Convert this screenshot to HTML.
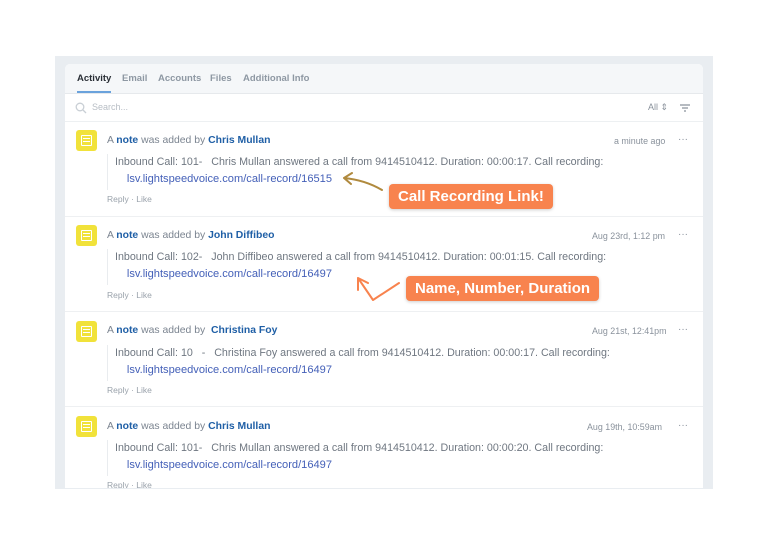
<!DOCTYPE html>
<html><head><meta charset="utf-8"><style>
*{margin:0;padding:0;box-sizing:border-box}
body{width:768px;height:543px;background:#fff;font-family:"Liberation Sans",sans-serif;position:relative;overflow:hidden}
.frame{position:absolute;left:55px;top:56px;width:658px;height:433px;background:#e9edf1}
.card{position:absolute;left:65px;top:64px;width:638px;height:424px;background:#fff;border-radius:5px 5px 0 0;overflow:hidden}
.tabs{position:absolute;left:0;top:0;width:638px;height:30px;background:#f5f7f9;border-bottom:1px solid #e6e9ec}
.tab{position:absolute;top:9px;font-size:9.5px;font-weight:bold;color:#8e98a3}
.search{position:absolute;left:0;top:31px;width:638px;height:27px;border-bottom:1px solid #edf0f2}
.a{position:absolute;white-space:nowrap}
.ic{position:absolute;left:11px;width:21px;height:21px;background:#f1e23a;border-radius:3px}
.ic i{position:absolute;left:5px;top:5px;width:11px;height:11px;border:1.5px solid #fff;border-radius:1px}
.ic b{position:absolute;left:7px;height:1.4px;width:7px;background:#fff}
.hd{font-size:10.4px;color:#7b8490}
.hd b{color:#1f5fa6}
.bd{font-size:10.7px;color:#6f7781;border-left:1px solid #e9ecef;padding-left:7px;height:36px;line-height:17px}
.lk{color:#4460b8;font-size:11.1px}
.rl{font-size:8.5px;color:#9aa2ab}
.tm{font-size:8.9px;color:#8a929c}
.dots{font-size:10px;color:#8a929c}
.sep{position:absolute;left:0;width:638px;height:1px;background:#eef0f2}
.call{position:absolute;background:#f8834e;color:#fff;font-weight:bold;font-size:15px;border-radius:4px;padding:0 9px;height:25px;line-height:25px;box-shadow:0 1px 3px rgba(0,0,0,.2)}
</style></head><body>
<div class="frame"></div>
<div class="card">
 <div class="tabs">
  <span class="tab" style="left:12px;color:#2a2f36">Activity</span>
  <div style="position:absolute;left:12px;top:27px;width:34px;height:2px;background:#6aa2dc"></div>
  <span class="tab" style="left:57px">Email</span>
  <span class="tab" style="left:93px">Accounts</span>
  <span class="tab" style="left:145px">Files</span>
  <span class="tab" style="left:178px">Additional Info</span>
 </div>
 <div class="search">
  <svg style="position:absolute;left:10px;top:7px" width="12" height="12" viewBox="0 0 12 12"><circle cx="5" cy="5" r="3.8" fill="none" stroke="#c9cfd5" stroke-width="1.3"/><path d="M8 8l3 3" stroke="#c9cfd5" stroke-width="1.3"/></svg>
  <span class="a" style="left:27px;top:7px;font-size:9px;color:#b8bec5">Search...</span>
  <span class="a" style="left:583px;top:7px;font-size:9px;color:#8a929c">All ⇕</span>
  <svg style="position:absolute;left:615px;top:9px" width="10" height="8" viewBox="0 0 10 8"><path d="M0 1h10M2 4h6M4 7h2" stroke="#8a929c" stroke-width="1.3"/></svg>
 </div>
</div>
<div id="entries" style="position:absolute;left:65px;top:64px;width:638px;height:424px;overflow:hidden">
 <div class="ic" style="top:66px"><i></i><b style="top:8px"></b><b style="top:11px"></b></div>
 <div class="a hd" style="left:42px;top:71px">A <b>note</b> was added by <b>Chris Mullan</b></div>
 <div class="a tm" style="left:549px;top:72px">a minute ago</div><div class="a dots" style="left:613px;top:70px">···</div>
 <div class="a bd" style="left:42px;top:90px">Inbound Call: 101- &nbsp;&nbsp;Chris Mullan answered a call from 9414510412. Duration: 00:00:17. Call recording:<br>&nbsp;&nbsp;&nbsp;&nbsp;<span class="lk">lsv.lightspeedvoice.com/call-record/16515</span></div>
 <div class="a rl" style="left:42px;top:130px">Reply · Like</div>
 <div class="sep" style="top:152px"></div>
 <div class="ic" style="top:161px"><i></i><b style="top:8px"></b><b style="top:11px"></b></div>
 <div class="a hd" style="left:42px;top:166px">A <b>note</b> was added by <b>John Diffibeo</b></div>
 <div class="a tm" style="left:527px;top:167px">Aug 23rd, 1:12 pm</div><div class="a dots" style="left:613px;top:165px">···</div>
 <div class="a bd" style="left:42px;top:185px">Inbound Call: 102- &nbsp;&nbsp;John Diffibeo answered a call from 9414510412. Duration: 00:01:15. Call recording:<br>&nbsp;&nbsp;&nbsp;&nbsp;<span class="lk">lsv.lightspeedvoice.com/call-record/16497</span></div>
 <div class="a rl" style="left:42px;top:226px">Reply · Like</div>
 <div class="sep" style="top:247px"></div>
 <div class="ic" style="top:257px"><i></i><b style="top:8px"></b><b style="top:11px"></b></div>
 <div class="a hd" style="left:42px;top:261px">A <b>note</b> was added by &nbsp;<b>Christina Foy</b></div>
 <div class="a tm" style="left:527px;top:262px">Aug 21st, 12:41pm</div><div class="a dots" style="left:613px;top:260px">···</div>
 <div class="a bd" style="left:42px;top:281px">Inbound Call: 10 &nbsp;&nbsp;- &nbsp;&nbsp;Christina Foy answered a call from 9414510412. Duration: 00:00:17. Call recording:<br>&nbsp;&nbsp;&nbsp;&nbsp;<span class="lk">lsv.lightspeedvoice.com/call-record/16497</span></div>
 <div class="a rl" style="left:42px;top:321px">Reply · Like</div>
 <div class="sep" style="top:342px"></div>
 <div class="ic" style="top:352px"><i></i><b style="top:8px"></b><b style="top:11px"></b></div>
 <div class="a hd" style="left:42px;top:357px">A <b>note</b> was added by <b>Chris Mullan</b></div>
 <div class="a tm" style="left:522px;top:358px">Aug 19th, 10:59am</div><div class="a dots" style="left:613px;top:356px">···</div>
 <div class="a bd" style="left:42px;top:376px">Inbound Call: 101- &nbsp;&nbsp;Chris Mullan answered a call from 9414510412. Duration: 00:00:20. Call recording:<br>&nbsp;&nbsp;&nbsp;&nbsp;<span class="lk">lsv.lightspeedvoice.com/call-record/16497</span></div>
 <div class="a rl" style="left:42px;top:416px">Reply · Like</div>
</div>
<svg style="position:absolute;left:0;top:0" width="768" height="543">
 <path d="M382 190 Q365 180 344 178 M344 178 L352 173 M344 178 L351 184" fill="none" stroke="#b08a3e" stroke-width="2" stroke-linecap="round"/>
 <path d="M399 283 L373 300 L358 278 M358 278 L358 290 M358 278 L368 283" fill="none" stroke="#f8834e" stroke-width="2" stroke-linecap="round" stroke-linejoin="round"/>
</svg>
<div class="call" style="left:389px;top:184px">Call Recording Link!</div>
<div class="call" style="left:406px;top:276px">Name, Number, Duration</div>
</body></html>
